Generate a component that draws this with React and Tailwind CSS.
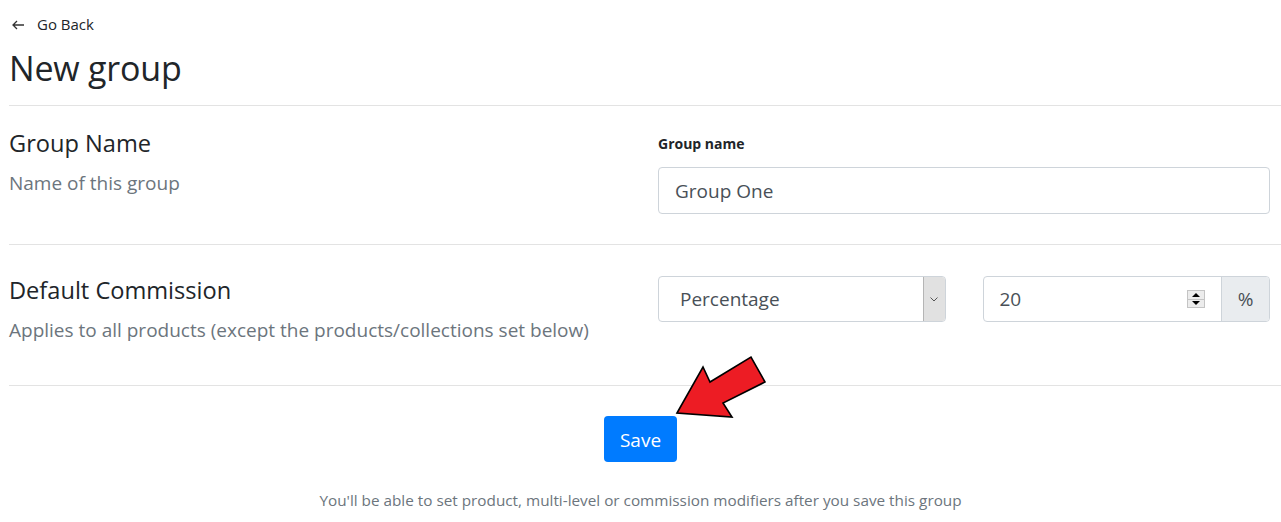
import React from "react";

export default function App() {
  return (
    <div className="w-[1281px] h-[522px] bg-white text-[#212529] overflow-hidden font-['Open_Sans',_sans-serif]">
      <div className="pl-[9px]">
        <div className="pt-[14px] flex items-center h-[20px] box-content text-[15px] leading-[20px] text-[#212529]">
          <svg width="14" height="10" viewBox="0 0 14 10" className="ml-[3px] mr-[11px] mt-[2px]">
            <path d="M1 5 H12 M5 1 L1 5 L5 9" stroke="#333" strokeWidth="1.3" fill="none" />
          </svg>
          <span>Go Back</span>
        </div>
        <h1 className="mt-[8px] text-[34px] leading-[52px] font-normal tracking-[-0.2px]">New group</h1>
      </div>
      <div className="ml-[9px] mt-[11px] border-t border-[#e3e3e3]" />

      {/* Row 1 */}
      <div className="grid grid-cols-[649px_1fr] pl-[9px] pr-[11px]">
        <div className="pt-[23px]">
          <div className="text-[23.6px] leading-[29px]">Group Name</div>
          <div className="mt-[10px] text-[19px] leading-[30px] text-[#6c757d]">Name of this group</div>
        </div>
        <div className="pt-[28px] pb-[30px]">
          <div className="text-[14px] leading-[20px] font-bold">Group name</div>
          <div className="mt-[13px] h-[47px] border border-[#ced4da] rounded-[4px] flex items-center pl-[16px] pt-[2px] text-[19px] text-[#495057]">
            Group One
          </div>
        </div>
      </div>
      <div className="ml-[9px] border-t border-[#e3e3e3]" />

      {/* Row 2 */}
      <div className="grid grid-cols-[649px_1fr] pl-[9px] pr-[11px]">
        <div className="pt-[31px] pb-[40px]">
          <div className="text-[23.6px] leading-[29px]">Default Commission</div>
          <div className="mt-[10px] text-[19px] leading-[30px] text-[#6c757d]">
            Applies to all products (except the products/collections set below)
          </div>
        </div>
        <div className="pt-[31px] grid grid-cols-2 gap-[37px] items-start">
          <div className="h-[46px] border border-[#ced4da] rounded-[4px] flex items-stretch overflow-hidden">
            <div className="flex-1 flex items-center pl-[21px] pt-[1px] text-[19px] text-[#495057]">Percentage</div>
            <div className="w-[22px] bg-[#e1e1e1] border-l border-[#b5b5b5] flex items-center justify-center">
              <svg width="8" height="5" viewBox="0 0 8 5">
                <path d="M0.5 0.5 L4 4 L7.5 0.5" stroke="#555" strokeWidth="1" fill="none" />
              </svg>
            </div>
          </div>
          <div className="h-[46px] border border-[#ced4da] rounded-[4px] flex items-stretch overflow-hidden">
            <div className="flex-1 flex items-center pl-[16px] pr-[16px] text-[19px] text-[#495057]">
              <span className="flex-1 pt-[1px]">20</span>
              <div className="w-[18px] h-[18px] border border-[#c4c4c4] bg-[#ececec] flex flex-col">
                <div className="flex-1 flex items-center justify-center border-b border-[#c4c4c4]">
                  <svg width="8" height="4" viewBox="0 0 8 4"><path d="M0 4 L4 0 L8 4 Z" fill="#000" /></svg>
                </div>
                <div className="flex-1 flex items-center justify-center">
                  <svg width="8" height="4" viewBox="0 0 8 4"><path d="M0 0 L4 4 L8 0 Z" fill="#000" /></svg>
                </div>
              </div>
            </div>
            <div className="w-[48px] bg-[#e9ecef] border-l border-[#ced4da] flex items-center justify-center pt-[1px] text-[19px] text-[#495057]">
              %
            </div>
          </div>
        </div>
      </div>
      <div className="ml-[9px] border-t border-[#e3e3e3]" />

      {/* Save */}
      <div className="relative flex flex-col items-center">
        <button className="mt-[30px] w-[73px] h-[46px] bg-[#007bff] rounded-[4px] text-white text-[19px] pt-[3px]">
          Save
        </button>
        <div className="mt-[26px] text-[15.3px] leading-[24px] text-[#6c757d]">
          You'll be able to set product, multi-level or commission modifiers after you save this group
        </div>
        <svg
          className="absolute left-[670px] top-[-34px]"
          width="102"
          height="70"
          viewBox="670 352 102 70"
        >
          <polygon
            points="677,413 703,367 710,382 751,357 765,382 723,403 732,417"
            fill="#ed1c24"
            stroke="#000"
            strokeWidth="1.6"
            strokeLinejoin="miter"
          />
        </svg>
      </div>
    </div>
  );
}
